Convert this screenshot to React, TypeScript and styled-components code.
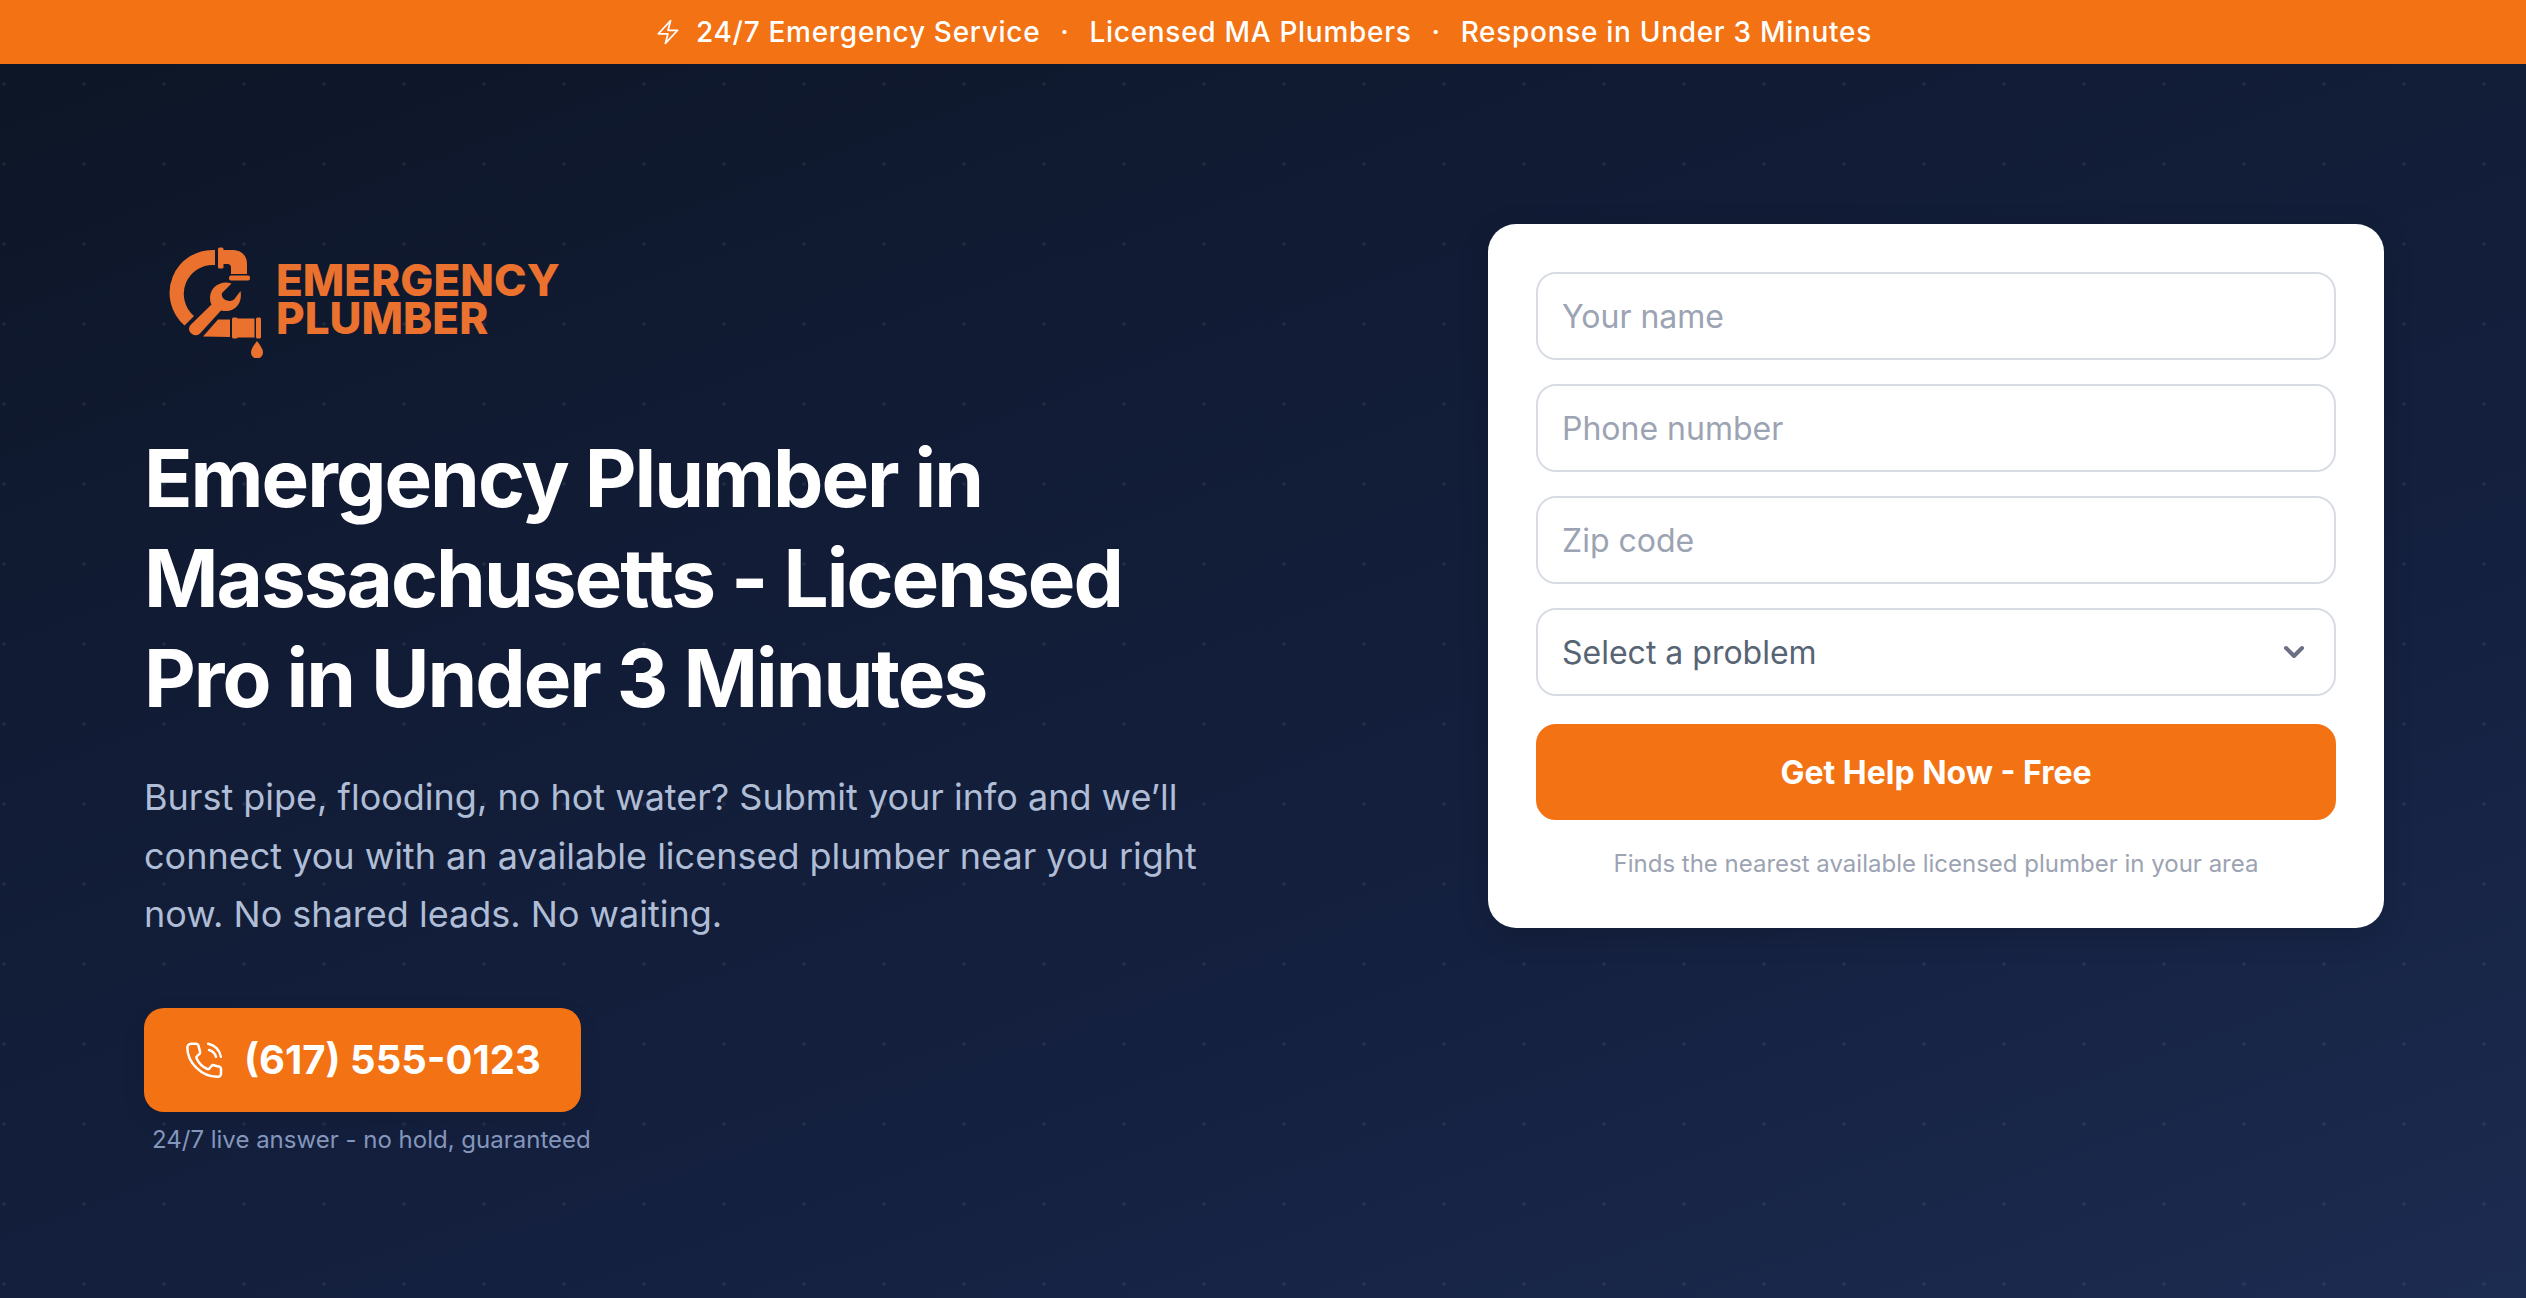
import React, { useState } from "react";
import styled, { createGlobalStyle } from "styled-components";

const orange = "#f37213";
const brand = "#eb722e";

const GlobalStyle = createGlobalStyle`
  *, *::before, *::after { box-sizing: border-box; }
  body {
    margin: 0;
    background: #0f172a;
    font-family: Inter, "Liberation Sans", sans-serif;
    -webkit-font-smoothing: antialiased;
  }
`;

const TopBar = styled.div`
  display: flex;
  align-items: center;
  justify-content: center;
  gap: 14px;
  height: 64px;
  background: ${orange};
  color: #fff;
  font-size: 28px;
  line-height: 40px;
  font-weight: 500;
  letter-spacing: 0.025em;
`;

const TopBarList = styled.div`
  display: flex;
  gap: 20px;
`;

const Hero = styled.section`
  min-height: calc(100vh - 64px);
  padding: 160px 142px 136px 144px;
  background:
    radial-gradient(circle at 4px 20px, rgba(255, 255, 255, 0.06) 2px, transparent 2px) 0 0 / 80px 80px,
    linear-gradient(160deg, #0d1626 0%, #111b34 30%, #14203f 65%, #1c2b50 100%);
`;

const HeroInner = styled.div`
  display: flex;
  justify-content: space-between;
  align-items: flex-start;
  gap: 96px;
`;

const Intro = styled.div`
  display: flex;
  flex-direction: column;
  align-items: flex-start;
  flex: 0 1 1088px;
`;

const Logo = styled.a`
  display: flex;
  align-items: center;
  gap: 12px;
  padding: 22px 0 0 24px;
  margin-bottom: 70px;
  text-decoration: none;
`;

const LogoName = styled.span`
  padding-bottom: 6px;
  color: ${brand};
  font-size: 44px;
  line-height: 38px;
  font-weight: 800;
`;

const Title = styled.h1`
  margin: 0 0 40px;
  color: #fff;
  font-size: 80px;
  line-height: 100px;
  font-weight: 700;
  letter-spacing: -0.025em;
  font-variant-ligatures: none;
`;

const Lead = styled.p`
  margin: 0 0 64px;
  color: #b0bdd6;
  font-size: 36px;
  line-height: 1.625;
`;

const CallButton = styled.a`
  display: flex;
  align-items: center;
  gap: 20px;
  height: 104px;
  padding: 0 40px;
  border-radius: 20px;
  background: ${orange};
  color: #fff;
  font-size: 40px;
  font-weight: 700;
  text-decoration: none;
  box-shadow: 0 8px 24px rgba(0, 0, 0, 0.08);
`;

const CallNote = styled.p`
  margin: 12px 0 0 8px;
  color: #8496bb;
  font-size: 24px;
  line-height: 32px;
`;

const Card = styled.form`
  display: flex;
  flex-direction: column;
  gap: 24px;
  flex: 0 0 896px;
  padding: 48px;
  border-radius: 28px;
  background: #fff;
  box-shadow: 0 8px 32px rgba(0, 0, 0, 0.14);
`;

const fieldStyle = `
  display: block;
  width: 100%;
  height: 88px;
  padding: 0 24px;
  border: 2px solid #d8dde3;
  border-radius: 20px;
  background: #fff;
  font-family: inherit;
  font-size: 32px;
  outline: none;
`;

const Field = styled.input`
  ${fieldStyle}
  color: #1f2937;
  &::placeholder { color: #9ca3b2; opacity: 1; }
`;

const SelectWrap = styled.div`
  display: grid;
  align-items: center;
  & > * { grid-area: 1 / 1; }
  & > svg { justify-self: end; margin-right: 26px; pointer-events: none; }
`;

const Select = styled.select`
  ${fieldStyle}
  appearance: none;
  color: #566474;
`;

const Submit = styled.button`
  height: 96px;
  margin-top: 4px;
  border: 2px solid ${orange};
  border-radius: 20px;
  background: ${orange};
  color: #fff;
  font-family: inherit;
  font-size: 32px;
  font-weight: 700;
`;

const CardNote = styled.p`
  margin: 4px 0 0;
  color: #9ca3b2;
  font-size: 24px;
  line-height: 32px;
  text-align: center;
`;

const BoltIcon = () => (
  <svg width="28" height="28" viewBox="0 0 24 24" fill="none" stroke="#fff" strokeWidth="1.5" strokeLinecap="round" strokeLinejoin="round" aria-hidden="true">
    <path d="M3.75 13.5l10.5-11.25L12 10.5h8.25L9.75 21.75 12 13.5H3.75z" />
  </svg>
);

const PhoneIcon = () => (
  <svg width="40" height="40" viewBox="0 0 24 24" fill="none" stroke="#fff" strokeWidth="1.5" strokeLinecap="round" strokeLinejoin="round" aria-hidden="true">
    <path d="M14.5 2.2a9.5 9.5 0 0 1 7.6 7.8M15 6a6 6 0 0 1 4.2 4.1" />
    <path d="M2 4.5A2.25 2.25 0 0 1 4.25 2.2h3.1c.6 0 1.1.4 1.3 1l1 4c.1.5-.1 1-.5 1.3L7.8 9.7c-.4.3-.5.8-.3 1.2a13 13 0 0 0 6.5 6.5c.4.2.9.1 1.2-.3l1.3-1.5c.3-.4.8-.6 1.3-.5l3.4.9c.6.2 1 .7 1 1.3v2.9A1.8 1.8 0 0 1 20.4 22C10.5 22.3 2 13.5 2 4.5z" />
  </svg>
);

const ChevronIcon = () => (
  <svg width="32" height="32" viewBox="0 0 32 32" fill="none" stroke="#6b7085" strokeWidth="4" strokeLinecap="round" strokeLinejoin="round" aria-hidden="true">
    <path d="M8 12l8 8 8-8" />
  </svg>
);

const LogoMark = () => (
  <svg width="96" height="112" viewBox="0 0 96 112" fill={brand} aria-hidden="true">
    <path d="M47 4A43 43 0 0 0 16.500 79.500L26 70A29 29 0 0 1 47 19z" />
    <path d="M51.500 1.500h2.500q1.500 0 1.500 1.500v1H64C74 4 79 10 79 18V28H63V22C63 19 62 18 59 18H55.500v3q0 1.500-1.500 1.500H51.500q-1.500 0-1.500-1.500V3q0-1.500 1.500-1.500z" />
    <rect x="61" y="29.500" width="21" height="5" rx="2" />
    <path d="M63.500 37.500C53 34 42 41 42 52Q42 56 43.500 58.500L22 79.500A6.500 6.500 0 0 0 32 87.500L53 64.500C65 67.500 75 59 72.500 45L66.500 53C64 56 58 55 56 53C53 50 53.500 47 55 46z" />
    <path d="M35 90.500L50 73.500H62V91z" />
    <path d="M65.500 71.500h2.500q1.500 0 1.500 1H86.500V91.500H69.500q0 1-1.500 1H65.500q-1.500 0-1.500-1.500V73q0-1.500 1.500-1.500z" />
    <rect x="88" y="71.500" width="5" height="21" rx="1.500" />
    <path d="M89 95C92 99 95 103 95 106.500A6 6 0 0 1 83 106.500C83 103 86 99 89 95z" />
  </svg>
);

const problems = ["Burst pipe", "Flooding", "No hot water"];

export default function App() {
  const [problem, setProblem] = useState("");
  return (
    <>
      <GlobalStyle />
      <TopBar>
        <BoltIcon />
        <TopBarList>
          <span>24/7 Emergency Service</span>
          <span>·</span>
          <span>Licensed MA Plumbers</span>
          <span>·</span>
          <span>Response in Under 3 Minutes</span>
        </TopBarList>
      </TopBar>
      <Hero>
        <HeroInner>
          <Intro>
            <Logo href="#">
              <LogoMark />
              <LogoName>
                EMERGENCY
                <br />
                PLUMBER
              </LogoName>
            </Logo>
            <Title>Emergency Plumber in Massachusetts - Licensed Pro in Under 3 Minutes</Title>
            <Lead>
              Burst pipe, flooding, no hot water? Submit your info and we’ll connect you with an
              available licensed plumber near you right now. No shared leads. No waiting.
            </Lead>
            <CallButton href="tel:+16175550123">
              <PhoneIcon />
              (617) 555-0123
            </CallButton>
            <CallNote>24/7 live answer - no hold, guaranteed</CallNote>
          </Intro>
          <Card onSubmit={(e: React.FormEvent) => e.preventDefault()}>
            <Field type="text" aria-label="Your name" placeholder="Your name" />
            <Field type="tel" aria-label="Phone number" placeholder="Phone number" />
            <Field type="text" aria-label="Zip code" placeholder="Zip code" />
            <SelectWrap>
              <Select
                aria-label="Select a problem"
                value={problem}
                onChange={(e: React.ChangeEvent<HTMLSelectElement>) => setProblem(e.target.value)}
              >
                <option value="">Select a problem</option>
                {problems.map((p) => (
                  <option key={p} value={p}>{p}</option>
                ))}
              </Select>
              <ChevronIcon />
            </SelectWrap>
            <Submit type="submit">Get Help Now - Free</Submit>
            <CardNote>Finds the nearest available licensed plumber in your area</CardNote>
          </Card>
        </HeroInner>
      </Hero>
    </>
  );
}
